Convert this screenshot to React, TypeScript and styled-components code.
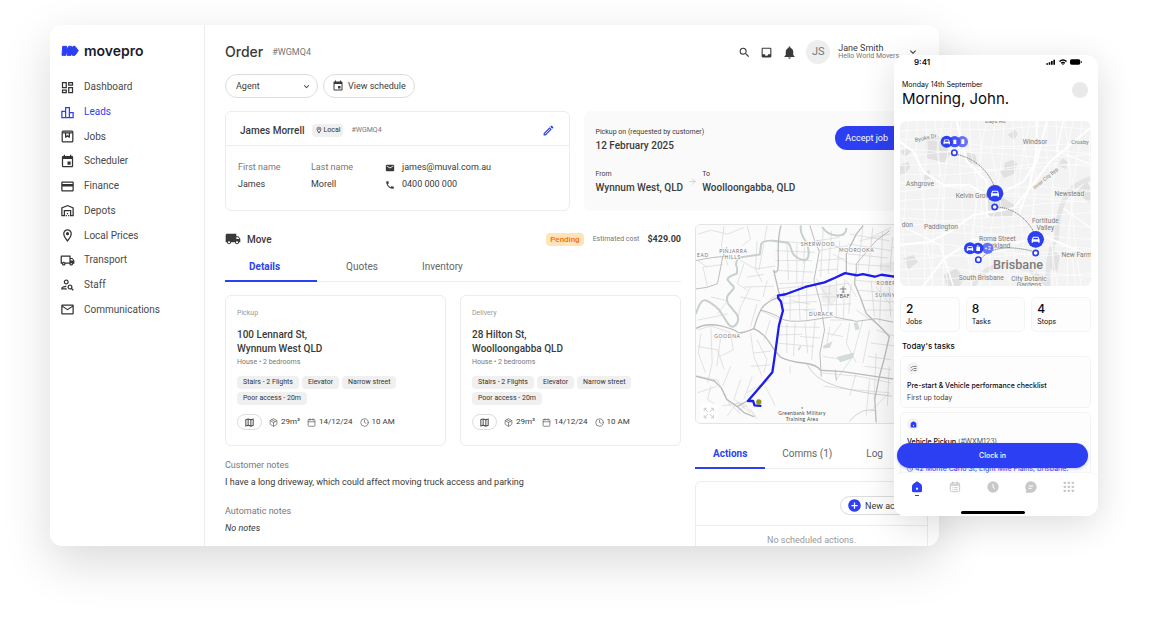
import React from "react";
import styled, { createGlobalStyle, css } from "styled-components";
import {
  MdOutlineDashboard,
  MdOutlineLeaderboard,
  MdEvent,
  MdCreditCard,
  MdOutlineWarehouse,
  MdOutlineLocationOn,
  MdOutlineLocalShipping,
  MdOutlinePersonSearch,
  MdMailOutline,
  MdSearch,
  MdInbox,
  MdNotifications,
  MdExpandMore,
  MdEmail,
  MdPhone,
  MdOutlineEdit,
  MdLocalShipping,
  MdOutlineMap,
  MdAddCircle,
} from "react-icons/md";
import { Package, Calendar, Clock, ArrowRight, ListChecks } from "lucide-react";

const blue = "#2d3ff3";
const ink = "#3a3a3a";
const line = "#ececec";
const roboto = `Roboto, "Liberation Sans", sans-serif`;
const inter = `Inter, "Liberation Sans", sans-serif`;

const Global = createGlobalStyle`
  *, *::before, *::after { box-sizing: border-box; }
  body { margin: 0; background: #fff; overflow-x: hidden; }
  h1, h2, h3, p, dl, dt, dd, ul { margin: 0; padding: 0; font-size: inherit; font-weight: inherit; }
  ul { list-style: none; }
  button, select { font: inherit; color: inherit; background: none; border: 0; padding: 0; margin: 0; cursor: pointer; }
  svg { display: block; flex: none; }
`;

const Stage = styled.div`
  position: relative;
  padding: 25px 224px 79px 50px;
  font-family: ${roboto};
  color: ${ink};
`;

const Desktop = styled.div`
  display: grid;
  grid-template-columns: 155px minmax(0, 1fr);
  background: #fff;
  border-radius: 12px;
  overflow: hidden;
  box-shadow: 0 16px 48px rgba(0, 0, 0, 0.15);
`;

/* Sidebar */

const Sidebar = styled.aside`
  border-right: 1px solid ${line};
  padding: 16px 0 0 10px;
`;

const Brand = styled.div`
  display: flex;
  align-items: center;
  gap: 5px;
  height: 20px;
  margin: 0 0 14px 1px;
  font: 600 14px/20px ${inter};
  color: #1c1c2c;
`;

const SideNav = styled.nav`
  display: flex;
  flex-direction: column;
  height: 247px;
`;

const SideLink = styled.a<{ $active?: boolean }>`
  flex: 1;
  display: flex;
  align-items: center;
  gap: 9px;
  font-size: 10px;
  line-height: 14px;
  color: ${(p) => (p.$active ? blue : "#4a4a4a")};
  text-decoration: none;
  svg {
    color: ${(p) => (p.$active ? blue : "#333")};
  }
`;

/* Main area */

const Main = styled.main`
  padding: 14px 11px 0 20px;
`;

const Row = styled.div<{ $gap?: number; $align?: string }>`
  display: flex;
  align-items: ${(p) => p.$align || "center"};
  gap: ${(p) => p.$gap ?? 0}px;
`;

const TopBar = styled.header`
  display: flex;
  align-items: center;
  height: 26px;
  padding-right: 9px;
`;

const Title = styled.h1`
  font: 500 14px/20px ${inter};
`;

const OrderId = styled.span`
  margin-left: 9px;
  font-size: 9px;
  color: #777;
`;

const TopActions = styled.div`
  display: flex;
  align-items: center;
  gap: 9px;
  margin-left: auto;
`;

const Avatar = styled.span`
  width: 24px;
  height: 24px;
  border-radius: 50%;
  background: #eee;
  color: #777;
  font-size: 11px;
  line-height: 24px;
  text-align: center;
`;

const UserMenu = styled.button`
  display: flex;
  align-items: center;
  gap: 8px;
  text-align: left;
`;

const UserName = styled.span`
  display: block;
  font-size: 9px;
  line-height: 8px;
`;

const UserOrg = styled.span`
  display: block;
  font-size: 7px;
  line-height: 8px;
  color: #777;
`;

const Toolbar = styled.div`
  display: flex;
  gap: 5px;
  margin: 9px 0 13px;
`;

const SelectWrap = styled.label`
  display: flex;
  align-items: center;
  width: 93px;
  height: 24px;
  border: 1px solid #dcdcdc;
  border-radius: 12px;
  padding: 0 5px 0 10px;
  font-size: 9px;
  select {
    appearance: none;
    outline: 0;
    flex: 1;
    min-width: 0;
  }
`;

const PillButton = styled.button<{ $small?: boolean }>`
  display: flex;
  align-items: center;
  gap: ${(p) => (p.$small ? 3 : 4)}px;
  height: ${(p) => (p.$small ? 19 : 24)}px;
  border: 1px solid #dcdcdc;
  border-radius: 12px;
  padding: 0 8px;
  padding-left: ${(p) => (p.$small ? 6 : 8)}px;
  font-size: 9px;
  white-space: nowrap;
`;

const TopCards = styled.div`
  display: grid;
  grid-template-columns: 1fr 1fr;
  gap: 14px;
  margin-bottom: 13px;
`;

const CustomerCard = styled.section`
  height: 100px;
  border: 1px solid ${line};
  border-radius: 6px;
`;

const CustomerHead = styled.div`
  display: flex;
  align-items: center;
  height: 34px;
  border-bottom: 1px solid ${line};
  padding: 3px 14px 0 14px;
`;

const CustomerName = styled.h2`
  font-size: 10px;
  font-weight: 500;
  margin-right: 7px;
`;

const Tag = styled.span<{ $tone?: "pending" }>`
  display: inline-flex;
  align-items: center;
  height: 13px;
  border-radius: 4px;
  padding: 0 6px;
  background: #f0f0f0;
  font-size: 7px;
  line-height: 13px;
  color: #333;
  ${(p) =>
    p.$tone === "pending" &&
    css`
      padding: 0 4px;
      background: #ffe4b8;
      color: #f96a0e;
      font-size: 8px;
      font-weight: 500;
    `}
`;

const LocalTag = styled(Tag)`
  gap: 1px;
  padding: 0 3px;
`;

const SmallId = styled.span`
  margin-left: 8px;
  font-size: 7px;
  color: #777;
`;

const EditButton = styled.button`
  margin-left: auto;
  color: ${blue};
`;

const CustomerBody = styled.div`
  display: grid;
  grid-template-columns: 73px 74px 1fr;
  padding: 13px 12px;
  font-size: 9px;
  line-height: 17px;
  dt {
    color: #777;
  }
`;

const Contact = styled.a`
  display: flex;
  align-items: center;
  gap: 7px;
  color: inherit;
  text-decoration: none;
`;

const PickupCard = styled.section`
  display: flex;
  flex-direction: column;
  justify-content: space-between;
  height: 100px;
  padding: 15px 12px 17px;
  border-radius: 6px;
  background: #fafafa;
`;

const Fact = styled.div`
  font-size: 7px;
  line-height: 13px;
  strong {
    display: block;
    font-size: 10px;
    line-height: 13px;
    font-weight: 500;
  }
`;

const AcceptButton = styled.button`
  display: flex;
  align-items: center;
  gap: 6px;
  height: 24px;
  margin-left: auto;
  border-radius: 12px;
  padding: 0 12px 0 10px;
  background: ${blue};
  color: #fff;
  font-size: 9px;
`;

const Columns = styled.div`
  display: grid;
  grid-template-columns: minmax(0, 456fr) minmax(0, 233fr);
  gap: 14px;
`;

const MoveHead = styled.div`
  display: flex;
  align-items: center;
  height: 30px;
  h2 {
    margin: 0 auto 0 6px;
    font-size: 10px;
    font-weight: 500;
  }
`;

const Cost = styled.p`
  display: flex;
  align-items: center;
  gap: 8px;
  margin-left: 9px;
  font-size: 7px;
  color: #777;
  strong {
    font-size: 9px;
    font-weight: 700;
    color: ${ink};
  }
`;

const Tabs = styled.div`
  display: flex;
  height: 28px;
  box-shadow: inset 0 -1px ${line};
`;

const Tab = styled.button<{ $active?: boolean; $pad: string }>`
  padding: ${(p) => p.$pad};
  border-bottom: 2px solid ${(p) => (p.$active ? blue : "transparent")};
  font-size: 10px;
  line-height: 25px;
  font-weight: ${(p) => (p.$active ? 700 : 400)};
  color: ${(p) => (p.$active ? blue : "#666")};
  display: flex;
  white-space: nowrap;
`;

const StopGrid = styled.div`
  display: grid;
  grid-template-columns: 1fr 1fr;
  gap: 14px;
  margin: 13px 0 11px;
`;

const StopCard = styled.section`
  border: 1px solid ${line};
  border-radius: 6px;
  padding: 11px 10px 15px 11px;
`;

const StopLabel = styled.p`
  font-size: 7px;
  line-height: 12px;
  color: #999;
  margin-bottom: 9px;
`;

const Address = styled.h3`
  font-size: 10px;
  line-height: 14px;
  font-weight: 500;
`;

const Dwelling = styled.p`
  font-size: 7px;
  line-height: 12px;
  color: #777;
  margin-bottom: 8px;
`;

const Chips = styled.ul`
  display: flex;
  flex-wrap: wrap;
  gap: 3px;
  li {
    display: flex;
  }
`;

const StopMeta = styled.div`
  display: flex;
  align-items: center;
  gap: 7px;
  margin-top: 9px;
  font-size: 8px;
  line-height: 12px;
`;

const MapButton = styled.button`
  display: grid;
  place-items: center;
  width: 25px;
  height: 16px;
  border: 1px solid #ddd;
  border-radius: 8px;
`;

const Notes = styled.dl`
  padding-bottom: 10px;
  font-size: 9px;
  line-height: 16px;
  dt {
    margin-bottom: 1px;
    color: #777;
  }
  dd + dt {
    margin-top: 13px;
  }
`;

const MapFrame = styled.div`
  height: 200px;
  border: 1px solid #e4e4e4;
  border-radius: 5px;
  overflow: hidden;
  margin-bottom: 17px;
  svg {
    width: 100%;
    height: 100%;
  }
`;

const SideColumn = styled.div`
  display: flex;
  flex-direction: column;
`;

const ActionBox = styled.section`
  flex: 1;
  margin-top: 12px;
  border: 1px solid ${line};
  border-bottom: 0;
  border-radius: 6px 6px 0 0;
`;

const ActionHead = styled.div`
  display: flex;
  justify-content: flex-end;
  padding: 14px 8px 10px;
  border-bottom: 1px solid ${line};
`;

const Empty = styled.p`
  padding-top: 8px;
  text-align: center;
  font-size: 9px;
  line-height: 12px;
  color: #999;
`;

/* Phone */

const Phone = styled.div`
  position: absolute;
  top: 55px;
  right: 65px;
  width: 204px;
  border-radius: 12px;
  overflow: hidden;
  background: #fff;
  color: #0a0a14;
  font-family: ${inter};
  box-shadow: 0 8px 36px rgba(0, 0, 0, 0.14);
`;

const StatusBar = styled.div`
  display: flex;
  align-items: center;
  justify-content: space-between;
  height: 14px;
  padding: 0 16px 0 20px;
  font-size: 8px;
  font-weight: 600;
`;

const PhoneBody = styled.div`
  padding: 0 7px 0 6px;
`;

const Greeting = styled.div`
  display: flex;
  justify-content: space-between;
  padding: 10px 3px 14px 2px;
  font-size: 7px;
  line-height: 12px;
  h2 {
    font-size: 15px;
    line-height: 16px;
    font-weight: 400;
  }
`;

const Face = styled.span`
  width: 16px;
  height: 16px;
  margin-top: 3px;
  border-radius: 50%;
  background: #e9e9e9;
`;

const PhoneMap = styled.div`
  height: 165px;
  border-radius: 6px;
  overflow: hidden;
  svg {
    width: 100%;
    height: 100%;
  }
`;

const Stats = styled.div`
  display: grid;
  grid-template-columns: repeat(3, 1fr);
  gap: 6px;
  margin: 11px 0 6px;
`;

const Stat = styled.div`
  border: 1px solid #f4f4f4;
  border-radius: 5px;
  padding: 4px 5px;
  background: #fdfdfd;
  font-size: 7px;
  line-height: 11px;
  strong {
    display: block;
    font-size: 12px;
    line-height: 14px;
    font-weight: 500;
  }
`;

const TasksTitle = styled.h2`
  padding-left: 2px;
  font-size: 8px;
  line-height: 16px;
  font-weight: 500;
`;

const Task = styled.article<{ $cut?: boolean }>`
  margin-top: ${(p) => (p.$cut ? 4 : 2)}px;
  border: 1px solid #f3f3f3;
  border-bottom-width: ${(p) => (p.$cut ? 0 : 1)}px;
  border-radius: ${(p) => (p.$cut ? "5px 5px 0 0" : "5px")};
  background: #fdfdfd;
  padding: 5px 6px 3px;
  font-size: 7px;
  line-height: 12px;
  color: #444;
  h3 {
    margin-top: 6px;
    color: #0a0a14;
    font-weight: 500;
  }
  h3 span {
    color: #555;
    font-weight: 400;
  }
`;

const TaskIcon = styled.span<{ $blue?: boolean }>`
  display: grid;
  place-items: center;
  width: 12px;
  height: 12px;
  border-radius: 50%;
  background: #f3f3f3;
  color: ${(p) => (p.$blue ? blue : "#333")};
`;

const TaskAddress = styled.p`
  display: flex;
  align-items: center;
  gap: 2px;
  margin-top: 3px;
  color: ${blue};
`;

const ClockIn = styled.button`
  position: absolute;
  left: 3px;
  right: 10px;
  bottom: 48px;
  height: 25px;
  border-radius: 13px;
  background: ${blue};
  color: #fff;
  font-size: 7px;
  font-weight: 500;
  box-shadow: 0 1px 3px rgba(45, 63, 243, 0.3);
`;

const PhoneNav = styled.nav`
  position: relative;
  display: grid;
  grid-template-columns: repeat(5, 1fr);
  justify-items: center;
  margin-top: -5px;
  padding: 8px 10px 2px 4px;
  background: #fff;
  border-radius: 8px 8px 0 0;
  box-shadow: 0 -1px 2px rgba(0, 0, 0, 0.04);
`;

const PhoneTab = styled.button<{ $active?: boolean }>`
  display: flex;
  height: 15px;
  color: ${(p) => (p.$active ? blue : "#c8c8c8")};
  flex-direction: column;
  align-items: center;
  gap: 2px;
  &::after {
    content: "";
    width: 4px;
    height: 1px;
    background: ${(p) => (p.$active ? blue : "transparent")};
  }
`;

const HomeBar = styled.div`
  grid-column: 1 / -1;
  width: 64px;
  height: 3px;
  margin-top: 15px;
  border-radius: 2px;
  background: #000;
`;

/* Drawings */

const Logo = () => (
  <svg width="18" height="12" viewBox="0 0 54 36" fill={blue} stroke={blue} strokeWidth="3" strokeLinejoin="round">
    <path d="M5 4H17L14 31H3z" />
    <path d="M14 20L23 4H32L30 31H18L20 18 12 31z" />
    <path d="M29 20L36 4H42L52 17 42 31H34L35 20 29 31z" />
  </svg>
);

const JobsIcon = ({ size = 16 }: { size?: number }) => (
  <svg width={size} height={size} viewBox="0 0 24 24" fill="none" stroke="currentColor" strokeWidth="2" strokeLinejoin="round">
    <rect x="3.5" y="3.5" width="17" height="17" rx="1.5" />
    <path d="M4 6h16" />
    <path d="M9 6v7l3-2 3 2V6" />
  </svg>
);

const streets = [
  "M20 40L60 28 110 40 160 20M100 15l-8 60 20 60M170 15l10 40-25 20M230 15l-8 45M150 120l45 25 60-8M200 60l-5 85 20 40M255 60l90 8M255 90l120 5M255 120l110 0M260 150l110 5M220 70l-15 80M290 60l5 120M320 70l0 120M345 120l-10 90",
  "M265 190l100-4M270 250l110-6M272 270l105-3M280 210l-4 80M300 205l0 95M325 200l5 100M350 195l0 110M275 230l150-10M270 320l120 2M265 345l70-2M262 370l110 10M290 310l0 90M315 310l-5 100M345 310l8 90M375 300l-10 120M330 350l60 4",
  "M380 60l70-10M385 90l90-15M385 120l80-6M385 150l60-4M400 20l-8 150M425 30l-10 130M450 60l-8 100M380 175l45 80M400 200l80-12M395 230l85 0M395 255l90-4M420 190l-6 90M440 180l0 110M465 175l-4 120M485 190l-8 90",
  "M480 40l120 20M475 70l130 20M475 100l120 12M480 130l120 8M520 20l-15 130M550 20l-14 140M580 30l-6 120M610 50l-8 100M500 180l90 8M505 210l100 8M515 240l100 5M530 270l80 0M545 180l10 110M575 180l-4 130M600 200l4 90M545 50l60-30M640 30l-10 160M660 60l-8 160M610 80l100 10M610 130l100 0M620 200l90 8",
  "M600 350l-60-60M480 310l-10 60 30 60M520 300l-30 110-50 70M540 330l-20 100M560 330l60 20M545 370l70 8M535 410l70 10M525 440l80 10M500 460l-20 70M560 400l-6 140M420 320l-10 60M410 340l50 10M400 410l60 10M395 460l110 10 100 20M400 500l80 10 120 10M600 440l-6 120M540 480l-10 110M600 520l-60 60",
  "M20 330l40-12 60 20M30 340l-8 60 22 60M60 320l4 110-14 60M90 350l-12 90M120 340l8 50-40 20M20 380l60 10 20 60M180 340l10 70 25 60M180 200l-30 60-14 60M200 250l-20 70M210 270l60 30M160 130l-20 60 30 20M170 170l50 -8M160 200l90 -2M230 180l-12 50M150 230l60 12M50 200l-14-60 60-8M20 120l30 20M60 230l50 12-30 40M20 300l90-18M190 400l50-6M180 440l60-4M200 360l30 60-10 40M240 300l-20 60",
  "M60 500l-10 40 30 20M20 520l60-20M120 440l-24 60M150 480l-20 60 30 20M185 470l-25 70M170 520l70-40M95 560l60-10 40 40M110 590l30-40M125 560l25 25M140 575l30-18M180 580l-40-30M200 600l-20-30M20 470l60 12 20 40 20 40M225 500l30 60M300 440l0 20M620 380l90 10M620 420l90 10M620 470l90 0M660 370l-10 180",
  "M262 205l110-10M268 218l-30 20M345 60l-5 70M300 240l60 12M340 270l40 6M470 180l30 50M420 300l70 0M425 350l30-40M560 200l40 50M500 270l60 40M510 60l90 -20M430 100l50 30",
];

const DesktopMap = () => (
  <svg viewBox="15 12 699 600" preserveAspectRatio="xMinYMid slice" fill="none" role="img" aria-label="Route map">
    <rect x="15" y="12" width="699" height="600" fill="#fbfbfb" />
    <g fill="#ebebeb">
      <path d="M570 130l40-6 20 16-20 16-36-4zM395 195l40 0 14 30-20 30-34-10z" opacity=".6" />
      <path d="M440 412l24-6 30-8-6 18-36 12zM400 378l28-14-8 20-20 2zM492 310l12-4 6 20-12 6z" fill="#d3dcd9" />
    </g>
    <g stroke="#d4d4d4" strokeWidth="2" strokeLinejoin="round">
      {streets.map((d) => (
        <path key={d} d={d} />
      ))}
    </g>
    <g stroke="#c6d0cd" strokeLinejoin="round" strokeLinecap="round">
      <path strokeWidth="6" d="M15 280Q28 238 42 240T84 268Q95 284 110 308T140 308Q146 296 138 282L112 250Q104 232 114 222L128 206Q132 198 122 192L110 178Q112 168 138 160Q142 148 136 132Q138 112 150 110L208 102 212 70Q222 58 248 60L292 66C304 72 300 92 312 104C330 120 350 124 354 110C360 90 350 66 340 50Q330 34 332 16" />
      <path strokeWidth="6" d="M398 20Q412 42 440 44T470 24" />
      <path strokeWidth="4" d="M436 452l4 30M325 390l6-10" />
    </g>
    <g stroke="#bcbcbc" strokeWidth="4" strokeLinejoin="round" strokeLinecap="round">
      <path d="M15 325Q50 308 90 318T140 336T190 326Q200 290 212 268T262 232" />
      <path d="M190 326Q220 340 236 366T270 412Q300 426 340 430T392 452L460 456 540 468 610 478" />
      <path d="M15 206Q50 204 80 190L96 108 108 80M15 120Q70 108 104 108" strokeWidth="3" />
      <path d="M272 15Q262 50 264 110T250 150L268 226" />
      <path d="M360 15L374 60 388 92 372 180 392 250 404 330 390 400 394 470" strokeWidth="3" />
      <path d="M212 270Q250 280 270 294T350 302L430 290 500 304 560 296 610 306" strokeWidth="3" />
      <path d="M470 158L470 100 500 40 520 15M497 158L495 190 512 230 530 280 574 322 600 350" />
      <path d="M500 160L500 130 560 60 600 30" strokeWidth="3" />
      <path d="M600 350L584 420 570 470 556 540 560 608" />
      <path d="M15 470L70 484 92 506 108 540 140 562 160 580 190 592M140 562L170 545" />
      <path d="M350 432Q372 480 440 500T606 530" strokeWidth="2" />
      <path d="M380 60Q440 70 470 95M480 605Q520 560 560 575" strokeWidth="2" />
    </g>
    <path d="M610 168L576 163 556 169 520 161 502 165 466 158 436 172 404 186 346 200 286 222 263 226 264 234 272 244 278 272 266 316 258 376 252 418 246 458 206 506 172 545 188 545 192 558 210 560" stroke="#1c1cf0" strokeWidth="7" strokeLinejoin="round" strokeLinecap="round" />
    <path d="M610 168l40 6 64 20" stroke="#1c1cf0" strokeWidth="7" />
    <circle cx="205" cy="548" r="8" fill="#8a9a1e" />
    <g fill="#777" fontFamily="Lato, sans-serif" fontSize="15" fontWeight="400" textAnchor="middle" letterSpacing="2" stroke="#fbfbfb" strokeWidth="4" paintOrder="stroke">
      <text x="36" y="108">EAD</text>
      <text x="128" y="97">PINJARRA</text>
      <text x="126" y="114">HILLS</text>
      <text x="384" y="75">SHERWOOD</text>
      <text x="501" y="93">MOOROOKA</text>
      <text x="110" y="354">GOODNA</text>
      <text x="394" y="287">DURACK</text>
      <text x="596" y="193">ROBERT</text>
      <text x="600" y="229">SUNNYBA</text>
      <g fill="#444" letterSpacing="1">
        <text x="460" y="233">YBAF</text>
        <text x="336" y="588">Greenbank Military</text>
        <text x="336" y="607">Training Area</text>
      </g>
    </g>
    <path d="M460 198v18M450 206h20M456 216h8" stroke="#555" strokeWidth="2" />
    <circle cx="336" cy="566" r="2" fill="#444" />
    <rect x="27" y="553" width="54" height="54" rx="6" fill="#fff" opacity=".85" />
    <path d="M40 575v-8h8M42 569l9 9M68 575v-8h-8M66 569l-9 9M40 588v8h8M42 594l9-9M68 588v8h-8M66 594l-9-9" stroke="#ccc" strokeWidth="3" />
  </svg>
);

const Car = ({ x, y, s = 1 }: { x: number; y: number; s?: number }) => (
  <g transform={`translate(${x} ${y}) scale(${s})`} fill="#fff">
    <path fillRule="evenodd" d="M-8-8h16l4 9v9h-4v-3h-16v3h-4v-9zM-6-5l-2 5h16l-2-5z" />
  </g>
);

const Dot = ({ x, y }: { x: number; y: number }) => (
  <circle cx={x} cy={y} r="8" fill="#fff" stroke={blue} strokeWidth="5" />
);

const RouteMap = () => (
  <svg viewBox="30 -132 573 495" preserveAspectRatio="xMidYMid slice" fill="none" role="img" aria-label="Today's route">
    <rect x="30" y="-132" width="573" height="495" fill="#f3f3f3" />
    <g fill="#e1e1e1">
      <path d="M108-74l28-18 22 14 24 44-20 26-52-12zM30 0l24-10 8 14-14 20-18 8zM292 96l50 4 34 22-10 32-62 2-20-16zM344-6l24-10 14 12-10 30-32 14zM352-90l22-16 10 12-12 18zM502 2l16-22 14 10-4 22zM330 18l26-12 12 24-28 6zM560 80l30-30 13 20v50zM230-40l26 10 6 30-30-6zM480 250l30 20-8 50-26-10zM100 30l18-16 6 26-22 6zM160 330l40-20 20 30-10 23h-40zM40 280l30-10 14 20-30 24z" />
      <path d="M30 -40l20-12 16 10-20 18z" />
    </g>
    <g stroke="#e4e4e4" strokeWidth="14" strokeLinejoin="round">
      <path d="M603 40Q540 60 520 110T500 220Q470 260 474 363" />
      <path d="M474 363Q420 300 350 300T250 363" />
    </g>
    <g stroke="#fff" strokeWidth="2">
      {Array.from({ length: 24 }, (_, i) => (
        <path key={`a${i}`} d={`M${30 + i * 26} -132l${(i % 5) * 8 - 20} 90 ${(i % 3) * 20 - 16} 120 ${(i % 4) * 12 - 22} 140 ${(i % 2) * 20} 150`} />
      ))}
      {Array.from({ length: 20 }, (_, i) => (
        <path key={`b${i}`} d={`M30 ${-128 + i * 26}l140 ${(i % 4) * 9 - 16} 130 ${(i % 3) * 16 - 12} 160 ${(i % 5) * 9 - 22} 150 ${(i % 2) * 22 - 10}`} />
      ))}
    </g>
    <g stroke="#fff" strokeWidth="6" strokeLinejoin="round">
      <path d="M30-70l40 30 30 60 60 40 80 0 60 40 100-50 40-60 30-120" />
      <path d="M30 240l90-10 60-30 70-50 120-20 50-60 60-80 120-100" />
      <path d="M440-132l0 90-20 100-30 80M100 363l60-80 90-60 130 10 80-20 143 60M200-132l30 120 60 60 0 110" />
      <path d="M30 180l120 60 40 123M520 130l83 60M520 -132l-20 90 103 40" strokeWidth="4" />
    </g>
    <g fill="#7c7c7c" fontFamily="Roboto, sans-serif" fontSize="20" textAnchor="middle" stroke="#f4f4f4" strokeWidth="4" paintOrder="stroke">
      <text x="435" y="-62">Windsor</text>
      <text x="570" y="-64" fontSize="17">Crosby</text>
      <text x="108" y="-76" fontSize="17" transform="rotate(-12 108 -76)">Byoks Dr</text>
      <text x="316" y="-126" fontSize="17">Days Rd</text>
      <text x="90" y="64">Ashgrove</text>
      <text x="252" y="99">Kelvin Grove</text>
      <text x="538" y="92">Newstead</text>
      <text x="52" y="186">don</text>
      <text x="153" y="193">Paddington</text>
      <text x="466" y="174">Fortitude</text>
      <text x="466" y="194">Valley</text>
      <text x="322" y="229">Roma Street</text>
      <text x="322" y="249">Parkland</text>
      <text x="560" y="275">New Farm</text>
      <text x="274" y="345">South Brisbane</text>
      <text x="417" y="347">City Botanic</text>
      <text x="417" y="366">Gardens</text>
      <text x="384" y="311" fontSize="38" fontWeight="500">Brisbane</text>
      <text x="470" y="44" fontSize="15" transform="rotate(-40 470 44)">Inner City Byp</text>
    </g>
    <g stroke="#555" strokeWidth="2" strokeDasharray="4 2">
      <path d="M203-31C250-20 290 10 312 62M324 126C370 130 410 160 432 202M274 280C310 240 370 245 426 258" />
    </g>
    <circle cx="217" cy="-70" r="17" fill="#6673f7" />
    <circle cx="194" cy="-70" r="17" fill="#4353f5" />
    <circle cx="170" cy="-70" r="18" fill={blue} />
    <Car x={170} y={-70} s={0.8} />
    <path d="M190-76h9v13h-9zM214-77h9v14h-9z" fill="#fff" />
    <circle cx="293" cy="250" r="17" fill="#6673f7" />
    <text x="293" y="256" fontSize="16" fill="#fff" textAnchor="middle" fontFamily="Inter, sans-serif">+2</text>
    <circle cx="264" cy="250" r="17" fill={blue} />
    <path d="M259 245h3v-5h3v5h5v13h-11z" fill="#fff" />
    <circle cx="240" cy="250" r="18" fill={blue} />
    <Car x={240} y={250} s={0.8} />
    <circle cx="315" cy="85" r="25" fill={blue} />
    <Car x={315} y={85} />
    <circle cx="437" cy="223" r="25" fill={blue} />
    <Car x={437} y={223} />
    <Dot x={193} y={-37} />
    <Dot x={314} y={126} />
    <Dot x={437} y={264} />
    <Dot x={265} y={284} />
  </svg>
);

const StatusIcons = () => (
  <svg width="36" height="8" viewBox="0 0 108 24" fill="#000">
    <path d="M1 16h5v4H1zM8 13h5v7H8zM15 9h5v11h-5zM22 5h5v15h-5z" />
    <path d="M39 9q12-10 24 0l-3 3q-9-7-18 0zM44 14q7-5 14 0l-3 3q-4-3-8 0zM51 21l-3-3q3-2 6 0z" />
    <rect x="72" y="4" width="31" height="16" rx="5" />
    <rect x="105" y="9" width="2" height="6" />
  </svg>
);

const HomeIcon = ({ size = 12 }: { size?: number }) => (
  <svg width={size} height={size} viewBox="0 0 36 36" fill="currentColor">
    <path fillRule="evenodd" d="M18 1l11 7q4 3 4 8v13q0 5-5 5H8q-5 0-5-5V16q0-5 4-8zM18 19l-4 4h2v4h4v-4h2z" />
  </svg>
);

const AgendaIcon = () => (
  <svg width="12" height="12" viewBox="0 0 36 36" fill="none" stroke="currentColor" strokeWidth="3">
    <rect x="4" y="6" width="28" height="26" rx="4" />
    <path d="M4 12h28M11 2v6M25 2v6" strokeWidth="5" />
    <path d="M10 20h3M16 20h10M10 26h3M16 26h10" />
  </svg>
);

const TimeIcon = () => (
  <svg width="12" height="12" viewBox="0 0 36 36" fill="currentColor">
    <circle cx="18" cy="18" r="17" />
    <path d="M18 9v10l6 4" stroke="#fff" strokeWidth="3" fill="none" />
  </svg>
);

const ChatIcon = () => (
  <svg width="12" height="12" viewBox="0 0 36 36" fill="currentColor">
    <path d="M18 1a17 17 0 1 1 0 34H3q-2 0-1-2l2-5A17 17 0 0 1 18 1z" />
    <path d="M11 15h14M11 22h9" stroke="#fff" strokeWidth="3" />
  </svg>
);

const GridIcon = () => (
  <svg width="12" height="12" viewBox="0 0 36 36" fill="currentColor">
    {[2, 14, 26].map((y) => [2, 14, 26].map((x) => <rect key={`${x}-${y}`} x={x} y={y} width="7" height="7" rx="2" />))}
  </svg>
);

/* Data */

const navItems = [
  { label: "Dashboard", Icon: MdOutlineDashboard },
  { label: "Leads", Icon: MdOutlineLeaderboard, active: true },
  { label: "Jobs", Icon: JobsIcon },
  { label: "Scheduler", Icon: MdEvent },
  { label: "Finance", Icon: MdCreditCard },
  { label: "Depots", Icon: MdOutlineWarehouse },
  { label: "Local Prices", Icon: MdOutlineLocationOn },
  { label: "Transport", Icon: MdOutlineLocalShipping },
  { label: "Staff", Icon: MdOutlinePersonSearch },
  { label: "Communications", Icon: MdMailOutline },
];

const stops = [
  { label: "Pickup", street: "100 Lennard St,", suburb: "Wynnum West QLD" },
  { label: "Delivery", street: "28 Hilton St,", suburb: "Woolloongabba QLD" },
];

const access = ["Stairs - 2 Flights", "Elevator", "Narrow street", "Poor access - 20m"];

const stats = [
  { value: 2, label: "Jobs" },
  { value: 8, label: "Tasks" },
  { value: 4, label: "Stops" },
];

const Stop = ({ label, street, suburb }: { label: string; street: string; suburb: string }) => (
  <StopCard>
    <StopLabel>{label}</StopLabel>
    <Address>
      {street}
      <br />
      {suburb}
    </Address>
    <Dwelling>House • 2 bedrooms</Dwelling>
    <Chips>
      {access.map((a) => (
        <li key={a}>
          <Tag>{a}</Tag>
        </li>
      ))}
    </Chips>
    <StopMeta>
      <MapButton aria-label={`Show ${label.toLowerCase()} on map`}>
        <MdOutlineMap size={11} />
      </MapButton>
      <Row $gap={3}>
        <Package size={9} color="#666" />
        29m³
      </Row>
      <Row $gap={3}>
        <Calendar size={9} color="#666" />
        14/12/24
      </Row>
      <Row $gap={3}>
        <Clock size={9} color="#666" />
        10 AM
      </Row>
    </StopMeta>
  </StopCard>
);

export default function App() {
  return (
    <Stage>
      <Global />
      <Desktop>
        <Sidebar>
          <Brand>
            <Logo />
            movepro
          </Brand>
          <SideNav aria-label="Main">
            {navItems.map(({ label, Icon, active }) => (
              <SideLink key={label} href="#" $active={active}>
                <Icon size={15} />
                {label}
              </SideLink>
            ))}
          </SideNav>
        </Sidebar>

        <Main>
          <TopBar>
            <Title>Order</Title>
            <OrderId>#WGMQ4</OrderId>
            <TopActions>
              <button aria-label="Search">
                <MdSearch size={13} />
              </button>
              <button aria-label="Inbox">
                <MdInbox size={13} />
              </button>
              <button aria-label="Notifications">
                <MdNotifications size={15} />
              </button>
              <UserMenu>
                <Avatar>JS</Avatar>
                <span>
                  <UserName>Jane Smith</UserName>
                  <UserOrg>Hello World Movers</UserOrg>
                </span>
                <MdExpandMore size={12} />
              </UserMenu>
            </TopActions>
          </TopBar>

          <Toolbar>
            <SelectWrap>
              <select aria-label="Agent" defaultValue="Agent">
                <option>Agent</option>
              </select>
              <MdExpandMore size={11} />
            </SelectWrap>
            <PillButton>
              <MdEvent size={12} />
              View schedule
            </PillButton>
          </Toolbar>

          <TopCards>
            <CustomerCard>
              <CustomerHead>
                <CustomerName>James Morrell</CustomerName>
                <LocalTag>
                  <MdOutlineLocationOn size={8} />
                  Local
                </LocalTag>
                <SmallId>#WGMQ4</SmallId>
                <EditButton aria-label="Edit customer">
                  <MdOutlineEdit size={13} />
                </EditButton>
              </CustomerHead>
              <CustomerBody>
                <dl>
                  <dt>First name</dt>
                  <dd>James</dd>
                </dl>
                <dl>
                  <dt>Last name</dt>
                  <dd>Morell</dd>
                </dl>
                <div>
                  <Contact href="mailto:james@muval.com.au">
                    <MdEmail size={10} />
                    james@muval.com.au
                  </Contact>
                  <Contact href="tel:0400000000">
                    <MdPhone size={10} />
                    0400 000 000
                  </Contact>
                </div>
              </CustomerBody>
            </CustomerCard>

            <PickupCard>
              <Row $align="flex-start">
                <Fact>
                  Pickup on (requested by customer)
                  <strong>12 February 2025</strong>
                </Fact>
                <AcceptButton>
                  Accept job
                  <ArrowRight size={10} />
                </AcceptButton>
              </Row>
              <Row $gap={5}>
                <Fact>
                  From
                  <strong>Wynnum West, QLD</strong>
                </Fact>
                <ArrowRight size={9} color="#c8c8c8" />
                <Fact>
                  To
                  <strong>Woolloongabba, QLD</strong>
                </Fact>
              </Row>
            </PickupCard>
          </TopCards>

          <Columns>
            <div>
              <MoveHead>
                <MdLocalShipping size={16} />
                <h2>Move</h2>
                <Tag $tone="pending">Pending</Tag>
                <Cost>
                  Estimated cost <strong>$429.00</strong>
                </Cost>
              </MoveHead>
              <Tabs role="tablist">
                <Tab role="tab" aria-selected $active $pad="0 37px 0 24px">
                  Details
                </Tab>
                <Tab role="tab" $pad="0 22px 0 29px">
                  Quotes
                </Tab>
                <Tab role="tab" $pad="0 22px">
                  Inventory
                </Tab>
              </Tabs>
              <StopGrid>
                {stops.map((s) => (
                  <Stop key={s.label} {...s} />
                ))}
              </StopGrid>
              <Notes>
                <dt>Customer notes</dt>
                <dd>I have a long driveway, which could affect moving truck access and parking</dd>
                <dt>Automatic notes</dt>
                <dd>
                  <em>No notes</em>
                </dd>
              </Notes>
            </div>

            <SideColumn>
              <MapFrame>
                <DesktopMap />
              </MapFrame>
              <Tabs role="tablist">
                <Tab role="tab" aria-selected $active $pad="0 18px 0 18px">
                  Actions
                </Tab>
                <Tab role="tab" $pad="0 17px">
                  Comms (1)
                </Tab>
                <Tab role="tab" $pad="0 17px">
                  Log
                </Tab>
              </Tabs>
              <ActionBox>
                <ActionHead>
                  <PillButton $small>
                    <MdAddCircle size={15} color={blue} />
                    New action
                  </PillButton>
                </ActionHead>
                <Empty>No scheduled actions.</Empty>
              </ActionBox>
            </SideColumn>
          </Columns>
        </Main>
      </Desktop>

      <Phone>
        <StatusBar>
          9:41
          <StatusIcons />
        </StatusBar>
        <PhoneBody>
          <Greeting>
            <div>
              <p>Monday 14th September</p>
              <h2>Morning, John.</h2>
            </div>
            <Face />
          </Greeting>
          <PhoneMap>
            <RouteMap />
          </PhoneMap>
          <Stats>
            {stats.map((s) => (
              <Stat key={s.label}>
                <strong>{s.value}</strong>
                {s.label}
              </Stat>
            ))}
          </Stats>
          <TasksTitle>Today's tasks</TasksTitle>
          <Task>
            <TaskIcon>
              <ListChecks size={7} />
            </TaskIcon>
            <h3>Pre-start &amp; Vehicle performance checklist</h3>
            <p>First up today</p>
          </Task>
          <Task $cut>
            <TaskIcon $blue>
              <HomeIcon size={7} />
            </TaskIcon>
            <h3>
              Vehicle Pickup <span>(#WXM123)</span>
            </h3>
            <p>First stop</p>
            <TaskAddress>
              <Clock size={6} />
              42 Monte Carlo St, Eight Mile Plains, Brisbane.
            </TaskAddress>
          </Task>
        </PhoneBody>
        <PhoneNav aria-label="Phone">
          <PhoneTab $active aria-label="Home">
            <HomeIcon />
          </PhoneTab>
          <PhoneTab aria-label="Calendar">
            <AgendaIcon />
          </PhoneTab>
          <PhoneTab aria-label="Time">
            <TimeIcon />
          </PhoneTab>
          <PhoneTab aria-label="Messages">
            <ChatIcon />
          </PhoneTab>
          <PhoneTab aria-label="More">
            <GridIcon />
          </PhoneTab>
          <HomeBar />
        </PhoneNav>
        <ClockIn>Clock in</ClockIn>
      </Phone>
    </Stage>
  );
}
